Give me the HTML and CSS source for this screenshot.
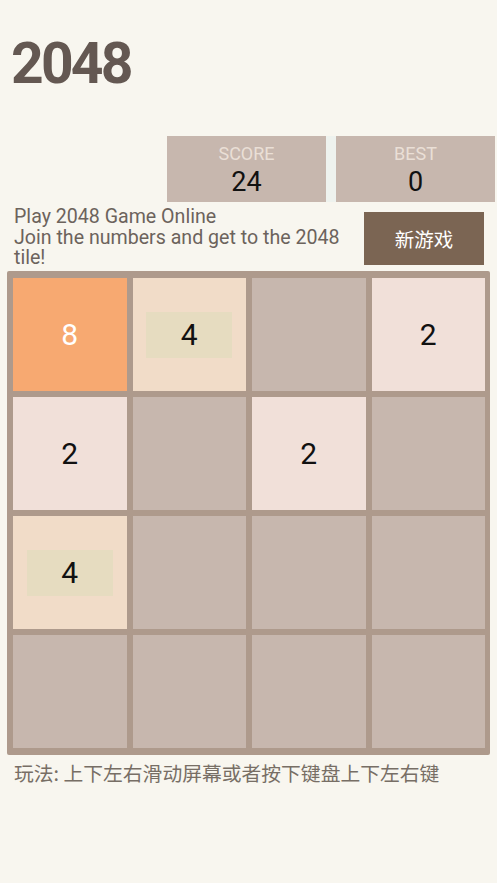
FILE: index.html
```html
<!DOCTYPE html>
<html lang="zh">
<head>
<meta charset="utf-8">
<title>2048</title>
<link rel="stylesheet" href="styles.css">
</head>
<body>
<div class="page">
  <h1 class="title">2048</h1>
  <div class="scores">
    <div class="score-box">
      <div class="score-label">SCORE</div>
      <div class="score-value">24</div>
    </div>
    <div class="score-box">
      <div class="score-label">BEST</div>
      <div class="score-value">0</div>
    </div>
  </div>
  <div class="intro">
    <p class="desc">Play 2048 Game Online<br>Join the numbers and get to the 2048 tile!</p>
    <button class="new-game">新游戏</button>
  </div>
  <div class="grid">
    <div class="cell t8">8</div>
    <div class="cell t4"><span class="inner">4</span></div>
    <div class="cell"></div>
    <div class="cell t2">2</div>
    <div class="cell t2">2</div>
    <div class="cell"></div>
    <div class="cell t2">2</div>
    <div class="cell"></div>
    <div class="cell t4"><span class="inner">4</span></div>
    <div class="cell"></div>
    <div class="cell"></div>
    <div class="cell"></div>
    <div class="cell"></div>
    <div class="cell"></div>
    <div class="cell"></div>
    <div class="cell"></div>
  </div>
  <p class="howto">玩法: 上下左右滑动屏幕或者按下键盘上下左右键</p>
</div>
</body>
</html>
```
FILE: styles.css
```css
html, body {
  margin: 0;
  padding: 0;
  background: #f8f6ef;
}
body {
  font-family: Roboto, "Noto Sans CJK SC", sans-serif;
  color: #776e65;
}
.page {
  width: 497px;
  padding: 35px 0 0 0;
  box-sizing: border-box;
}
.title {
  margin: 0 0 0 11px;
  font-size: 57px;
  line-height: 58px;
  font-weight: 700;
  letter-spacing: -2.8px;
  color: #645852;
  height: 58px;
}
.scores {
  display: flex;
  gap: 10px;
  margin: 43px 0 0 167px;
  width: 328px;
  background: #eef2ee;
}
.score-box {
  width: 159px;
  height: 66px;
  background: #c7b7ae;
  display: flex;
  flex-direction: column;
  align-items: center;
}
.score-label {
  margin-top: 8px;
  font-size: 18px;
  line-height: 20px;
  color: #eadfd6;
}
.score-value {
  margin-top: 2px;
  font-size: 27px;
  line-height: 32px;
  color: #111;
}
.intro {
  display: flex;
  justify-content: space-between;
  align-items: flex-start;
  padding: 0 13px 0 14px;
  height: 69px;
}
.desc {
  margin: 5px 0 0 0;
  width: 345px;
  font-size: 19.6px;
  line-height: 20.5px;
  color: #6c635c;
}
.new-game {
  margin-top: 10px;
  width: 120px;
  height: 53px;
  border: none;
  background: #7b6553;
  color: #fff;
  font-family: "Noto Sans CJK SC", sans-serif;
  font-size: 19.5px;
  padding: 0;
}
.grid {
  margin-left: 7px;
  width: 483px;
  box-sizing: border-box;
  padding: 7px 6px 7px 6px;
  background: #ae9a8c;
  border-radius: 2px;
  display: grid;
  grid-template-columns: repeat(4, 113.5px);
  grid-auto-rows: 113px;
  gap: 6px;
}
.cell {
  background: #c7b7ae;
  display: flex;
  align-items: center;
  justify-content: center;
  font-size: 30px;
  color: #111;
}
.t2 { background: #f1e0d9; }
.t4 { background: #f1dcc8; }
.t8 { background: #f7a971; color: #fff; }
.inner {
  display: flex;
  align-items: center;
  justify-content: center;
  width: 86px;
  height: 46px;
  background: #e6dcc0;
}
.howto {
  margin: 6px 0 0 14px;
  font-family: "Noto Sans CJK SC", sans-serif;
  font-size: 19.8px;
  line-height: 24px;
  color: #776e65;
}
```
